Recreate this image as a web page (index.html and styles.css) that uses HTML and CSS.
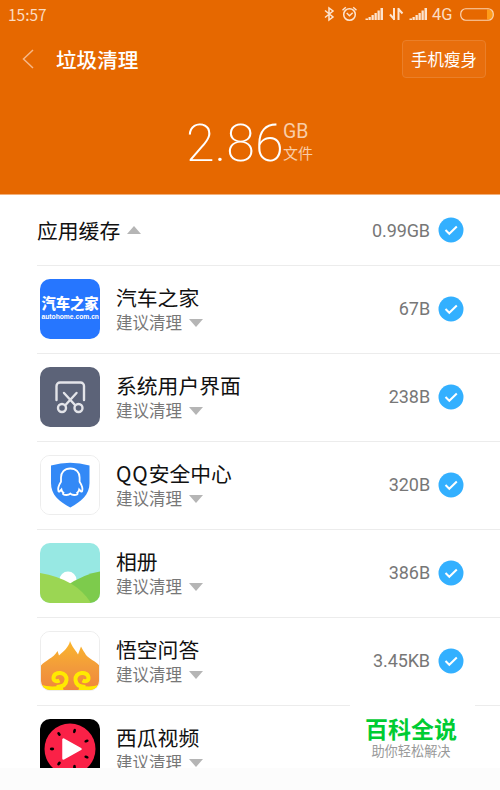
FILE: index.html
```html
<!DOCTYPE html>
<html lang="zh-CN">
<head>
    <meta charset="UTF-8">
    <meta name="viewport" content="width=device-width, initial-scale=1.0">
    <title>垃圾清理</title>
    <link rel="stylesheet" href="styles.css">
</head>
<body>
    <div class="screen">
        <header class="header">
            <div class="status-bar">
                <span class="time">15:57</span>
                <svg class="status-icons" width="106" height="28" viewBox="0 0 106 28" fill="none" stroke="#fde4cf" stroke-width="1.5">
                    <path d="M3 10.500l8 6.500-4 3V8l4 3-8 6.500"/>
                    <circle cx="27.500" cy="14.500" r="5.800"/>
                    <path d="M24.700 13l2.800 2.700 3.200-2.900M20.500 10.200l3.300-2.900M34.500 10.200l-3.300-2.900"/>
                    <path class="solid" d="M43.500 20v-1.500H46V20zM46.500 20v-3h2.300v3zM49.500 20v-5h2.300v5zM52.500 20v-7h2.300v7zM55.500 20v-9.500h2.300V20zM58.500 20V8H61v12z"/>
                    <path stroke-width="2" d="M72 8v12M72.500 19.500l-4.500-5M76.500 20V8M76 8.500l4.500 5"/>
                    <path class="solid" d="M87.500 20v-1.500H90V20zM90.500 20v-3h2.300v3zM93.500 20v-5h2.300v5zM96.500 20v-7h2.300v7zM99.500 20v-9.500h2.300V20zM102.500 20V8h2.500v12z"/>
                </svg>
                <span class="network">4G</span>
                <svg class="battery" width="34" height="13" viewBox="0 0 34 13">
                    <path d="M27 1.500h1.500a4.500 4.500 0 0 1 0 10H27z" fill="#ff9c1a"/>
                    <rect x="0.750" y="0.750" width="32.500" height="11.500" rx="5" fill="none" stroke="#fbd3b2" stroke-width="1.200"/>
                </svg>
            </div>
            <div class="title-bar">
                <svg class="back" width="12" height="20" viewBox="0 0 12 20"><path d="M11 1L1.500 10 11 19" fill="none" stroke="#f6b888" stroke-width="1.500"/></svg>
                <h1>垃圾清理</h1>
                <button class="slim-button">手机瘦身</button>
            </div>
            <div class="total">
                <span class="total-number">2.86</span>
                <div class="total-unit"><span>GB</span><span class="files">文件</span></div>
            </div>
        </header>

        <main class="list">
            <div class="section">
                <h2>应用缓存</h2>
                <i class="arrow up"></i>
                <span class="size">0.99GB</span>
                <svg class="check" viewBox="0 0 26 26"><circle cx="13" cy="13" r="12.500"/><path d="M7.500 13l3.800 3.800 7.500-7.300"/></svg>
            </div>

            <div class="row">
                <div class="app-icon autohome"><b>汽车之家</b><small>autohome.com.cn</small></div>
                <div class="info"><h3>汽车之家</h3><p>建议清理<i class="arrow down"></i></p></div>
                <span class="size">67B</span>
                <svg class="check" viewBox="0 0 26 26"><circle cx="13" cy="13" r="12.500"/><path d="M7.500 13l3.800 3.800 7.500-7.300"/></svg>
            </div>

            <div class="row">
                <svg class="app-icon" viewBox="0 0 60 60">
                    <rect width="60" height="60" fill="#5c6378"/>
                    <g fill="none" stroke="#e3e4e9" stroke-width="2.400" stroke-linecap="round">
                        <path d="M16.500 33V19a3.500 3.500 0 0 1 3.500-3.500h20.500A3.500 3.500 0 0 1 44 19v14"/>
                        <path d="M24 26l11 12M36.500 26L25.500 38"/>
                        <circle cx="22" cy="41" r="4"/>
                        <circle cx="38.500" cy="41" r="4"/>
                    </g>
                </svg>
                <div class="info"><h3>系统用户界面</h3><p>建议清理<i class="arrow down"></i></p></div>
                <span class="size">238B</span>
                <svg class="check" viewBox="0 0 26 26"><circle cx="13" cy="13" r="12.500"/><path d="M7.500 13l3.800 3.800 7.500-7.300"/></svg>
            </div>

            <div class="row">
                <svg class="app-icon outlined" viewBox="1 1 58 58">
                    <rect width="60" height="60" fill="#fff"/>
                    <path d="M11 10.500Q30 5 49.500 10.500V28C49.500 40 41 46.500 30.300 52.500 19 46.500 11 40 11 28z" fill="#3389f6"/>
                    <path d="M30.300 13.500c-6 0-9.300 4.200-9.300 9v4.200c-1.800 2.800-3.500 6.500-2.600 9.300.8 1.500 2-.3 3-1.500.3 1.800 1.200 2.800 2 3.300-1.200 1.700.6 2.200 3 2.200 1.800 0 3-.5 3.900-1.400.9.900 2.100 1.400 3.900 1.400 2.400 0 4.200-.5 3-2.200.8-.5 1.700-1.500 2-3.300 1 1.200 2.200 3 3 1.500.9-2.800-.8-6.500-2.600-9.300v-4.200c0-4.800-3.300-9-9.300-9z" fill="none" stroke="#fff" stroke-width="1.800"/>
                </svg>
                <div class="info"><h3><span class="latin">QQ</span>安全中心</h3><p>建议清理<i class="arrow down"></i></p></div>
                <span class="size">320B</span>
                <svg class="check" viewBox="0 0 26 26"><circle cx="13" cy="13" r="12.500"/><path d="M7.500 13l3.800 3.800 7.500-7.300"/></svg>
            </div>

            <div class="row">
                <svg class="app-icon" viewBox="0 0 60 60">
                    <rect width="60" height="60" fill="#97e8e3"/>
                    <circle cx="28" cy="37" r="8.500" fill="#fff"/>
                    <path d="M26 43Q44 31 60 28.500V60H26z" fill="#7dcb4c"/>
                    <path d="M0 30Q36 36 51 60H0z" fill="#9bd653"/>
                </svg>
                <div class="info"><h3>相册</h3><p>建议清理<i class="arrow down"></i></p></div>
                <span class="size">386B</span>
                <svg class="check" viewBox="0 0 26 26"><circle cx="13" cy="13" r="12.500"/><path d="M7.500 13l3.800 3.800 7.500-7.300"/></svg>
            </div>

            <div class="row">
                <svg class="app-icon outlined" viewBox="1 1 58 58">
                    <defs>
                        <linearGradient id="flame" x1="0" y1="0" x2="0" y2="1">
                            <stop offset="0" stop-color="#fbb62b"/>
                            <stop offset="0.550" stop-color="#f29a3c"/>
                            <stop offset="1" stop-color="#f0853c"/>
                        </linearGradient>
                    </defs>
                    <rect width="60" height="60" fill="#fff"/>
                    <path d="M0 60V36C3 30 13 28 17.500 20l1.500 4.500C23 21 29 16 30 10c2 6 5 8 8 13.500L41 15.500c2 4 3 5 5 8.500 4 5 11 6 14 12V60z" fill="url(#flame)"/>
                    <g fill="none" stroke="#ffea00" stroke-width="4">
                        <path d="M19.500 49.500c-3 1.500-6 .5-6-2.500 0-3.500 3.500-5.500 7-5 4 .5 6.500 3.500 6 7-.5 5-5 7-10 7"/>
                        <path d="M42.500 49.500c3 1.500 6 .5 6-2.500 0-3.500-3.500-5.500-7-5-4 .5-6.500 3.500-6 7 .5 5 5 7 10 7"/>
                    </g>
                    <path d="M0 53.500q10 3.500 22 1l2 5.500H0zM60 53.500q-9 3.500-20 1L38 60h22z" fill="#ffea00"/>
                </svg>
                <div class="info"><h3>悟空问答</h3><p>建议清理<i class="arrow down"></i></p></div>
                <span class="size">3.45KB</span>
                <svg class="check" viewBox="0 0 26 26"><circle cx="13" cy="13" r="12.500"/><path d="M7.500 13l3.800 3.800 7.500-7.300"/></svg>
            </div>

            <div class="row">
                <svg class="app-icon" viewBox="0 0 60 60">
                    <rect width="60" height="60"/>
                    <circle cx="30" cy="30" r="25.500" fill="#fa2147"/>
                    <g>
                        <ellipse cx="34.500" cy="12" rx="1.400" ry="2.200" transform="rotate(15 34.500 12)"/>
                        <ellipse cx="19" cy="15" rx="1.400" ry="2.200" transform="rotate(-35 19 15)"/>
                        <ellipse cx="12" cy="30" rx="2.200" ry="1.400"/>
                        <ellipse cx="19" cy="44.500" rx="1.400" ry="2.200" transform="rotate(35 19 44.500)"/>
                        <ellipse cx="34.500" cy="48" rx="1.400" ry="2.200"/>
                        <ellipse cx="46.500" cy="22" rx="2.200" ry="1.400" transform="rotate(-20 46.500 22)"/>
                        <ellipse cx="46.500" cy="38" rx="2.200" ry="1.400" transform="rotate(20 46.500 38)"/>
                    </g>
                    <path d="M23.500 20.500v19l17-9.500z" fill="#fff" stroke="#fff" stroke-width="2.500" stroke-linejoin="round"/>
                </svg>
                <div class="info"><h3>西瓜视频</h3><p>建议清理<i class="arrow down"></i></p></div>
            </div>
        </main>

        <footer class="footer"></footer>

        <div class="watermark">
            <strong>百科全说</strong>
            <span>助你轻松解决</span>
        </div>
    </div>
</body>
</html>
```
FILE: styles.css
```css
* {
    margin: 0;
    padding: 0;
    box-sizing: border-box;
}

body {
    font-family: Roboto, "Noto Sans CJK SC", sans-serif;
    background: #fff;
}

.screen {
    position: relative;
    width: 500px;
    height: 790px;
    overflow: hidden;
    display: flex;
    flex-direction: column;
}

.header {
    height: 195px;
    flex-shrink: 0;
    background: #e66800;
    border-bottom: 1px solid #f2b07a;
    color: #fff;
}

.status-bar {
    height: 28px;
    display: flex;
    align-items: center;
    padding: 0 6px 0 8px;
    color: #fbdcc3;
}

.time {
    flex: 1;
    font-family: "Noto Sans CJK SC", sans-serif;
    font-size: 15.5px;
    line-height: 26px;
}

.status-icons {
    margin-right: 4px;
}

.solid {
    fill: #fde4cf;
    stroke: none;
}

.network {
    width: 28px;
    font-size: 16.5px;
    line-height: 28px;
    padding-top: 2px;
}

.title-bar {
    height: 62px;
    display: flex;
    align-items: center;
    padding: 0 14px 0 22px;
}

h1 {
    flex: 1;
    margin-left: 22px;
    padding-top: 3px;
    font-size: 20.6px;
    font-weight: 500;
    line-height: 30px;
}

.slim-button {
    width: 84px;
    height: 38px;
    border: 1px solid #ea7f29;
    border-radius: 4px;
    background: #e86e0c;
    color: #fff;
    font-family: inherit;
    font-size: 16.5px;
}

.total {
    display: flex;
    padding: 25px 0 0 186px;
}

.total-number {
    font-size: 52px;
    font-weight: 200;
    line-height: 58px;
    width: 97px;
}

.total-unit {
    display: flex;
    flex-direction: column;
    padding-top: 6px;
    color: #f9cda8;
    font-size: 19.5px;
    line-height: 22px;
}

.files {
    font-size: 15px;
}

.list {
    height: 573px;
    overflow: hidden;
    padding-left: 37px;
}

.section {
    height: 70px;
    display: flex;
    align-items: center;
    padding-right: 36px;
}

h2,
h3 {
    color: #111;
    font-family: "Noto Sans CJK SC", sans-serif;
    font-size: 20.8px;
    font-weight: 400;
    line-height: 28px;
}

h3 {
    line-height: 24px;
    padding-bottom: 4px;
}

.latin {
    letter-spacing: 0.9px;
}

.arrow {
    display: inline-block;
    border: 7px solid transparent;
}

.arrow.up {
    margin-left: 7px;
    border-top: 0;
    border-bottom: 8px solid #b5b5b5;
}

.arrow.down {
    margin: 0 0 2px 7px;
    border-bottom: 0;
    border-top: 8px solid #b5b5b5;
}

.size {
    margin-left: auto;
    margin-right: 8px;
    color: #777;
    font-size: 18px;
    letter-spacing: -0.1px;
}

.check {
    width: 26px;
    height: 26px;
    fill: #33b0ff;
}

.check path {
    fill: none;
    stroke: #fff;
    stroke-width: 2;
}

.row {
    height: 88px;
    display: flex;
    align-items: center;
    padding: 0 36px 2px 3px;
    border-top: 1px solid #ececec;
}

.app-icon {
    width: 60px;
    height: 60px;
    border-radius: 10px;
    flex-shrink: 0;
    overflow: hidden;
}

.outlined {
    border: 1px solid #ededed;
}

.autohome {
    display: flex;
    flex-direction: column;
    align-items: center;
    justify-content: center;
    background: #2676ff;
    color: #fff;
    white-space: nowrap;
}

.autohome b {
    font-size: 14.3px;
    font-weight: 900;
    line-height: 15px;
}

.autohome small {
    font-family: "Liberation Sans", sans-serif;
    font-size: 8px;
    font-weight: 700;
    line-height: 9px;
    transform: scaleX(0.84);
}

.info {
    margin: 2px 0 0 16px;
}

.info p {
    display: flex;
    align-items: center;
    color: #777;
    font-size: 16.5px;
    line-height: 22px;
}

.footer {
    flex: 1;
    background: #fcfcfc;
}

/* logo laid over the bottom right of the list */
.watermark {
    position: absolute;
    left: 350px;
    top: 705px;
    width: 125px;
    height: 63px;
    background: #fff;
    display: flex;
    flex-direction: column;
    align-items: center;
    padding: 12px 3px 0 0;
}

.watermark strong {
    color: #0c3;
    font-size: 23px;
    font-weight: 700;
    line-height: 27px;
}

.watermark span {
    color: #999;
    font-size: 13.2px;
    line-height: 15px;
}
```
